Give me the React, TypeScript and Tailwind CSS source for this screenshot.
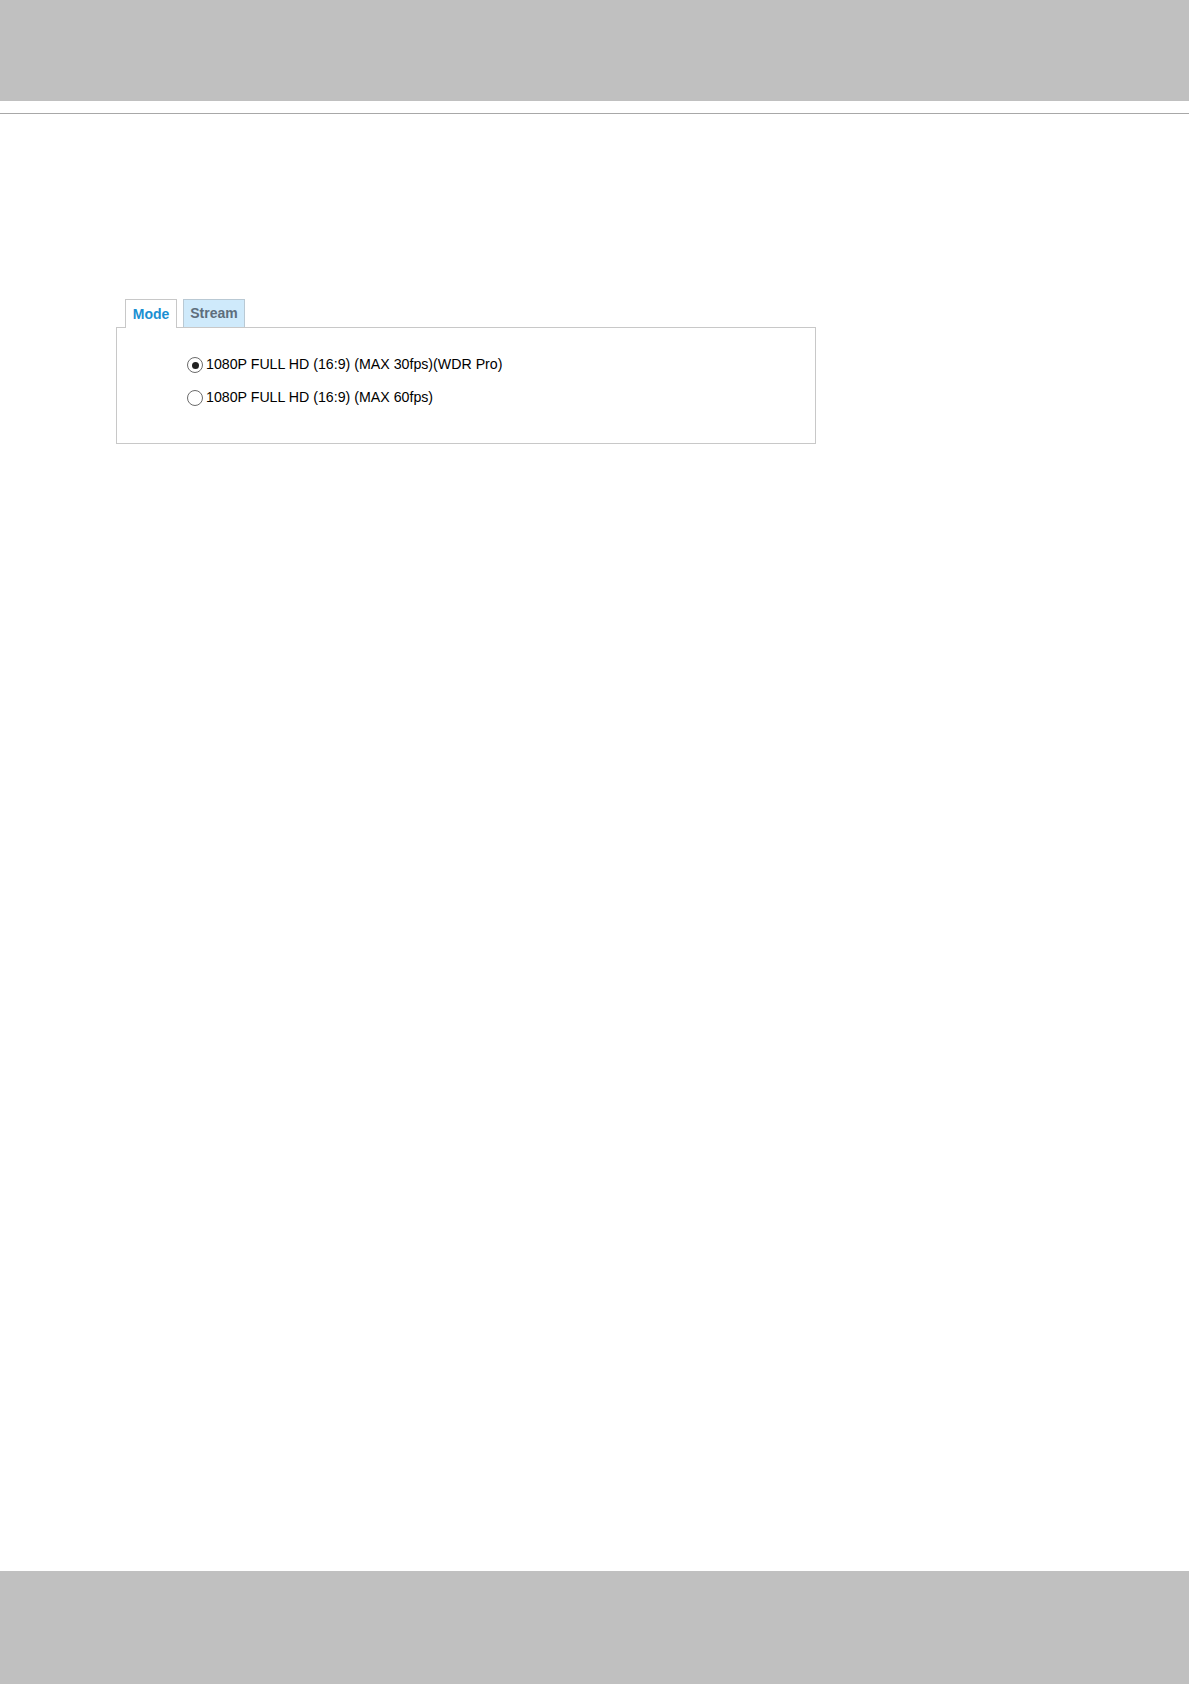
export default function App() {
  const options = [
    { id: "wdr", label: "1080P FULL HD (16:9) (MAX 30fps)(WDR Pro)", checked: true },
    { id: "60", label: "1080P FULL HD (16:9) (MAX 60fps)", checked: false },
  ];

  return (
    <div className="flex h-[1684px] w-[1191px] flex-col bg-white font-['Liberation_Sans',Arial,sans-serif]">
      <div className="h-[101px] w-[1189px] shrink-0 bg-[#c0c0c0]" />
      <div className="mt-[12px] h-px w-[1189px] shrink-0 bg-[#a8a8a8]" />

      <div className="mt-[185px] pl-[116px]">
        <div className="flex items-end gap-[6px] pl-[9px]">
          <div className="relative z-10 -mb-px flex h-[29px] w-[52px] items-center justify-center border border-b-0 border-[#c8c8c8] bg-white text-[14px] font-bold text-[#1b8fd2]">
            Mode
          </div>
          <div className="flex h-[28px] w-[62px] items-center justify-center border border-b-0 border-[#b9c9d4] bg-[#cfeafb] text-[14px] font-bold text-[#5e6e7c]">
            Stream
          </div>
        </div>
        <div className="h-[117px] w-[700px] border border-[#c8c8c8] bg-white pl-[70px] pt-[28px]">
          <div className="flex flex-col gap-[15px]">
            {options.map((o) => (
              <div key={o.id} className="flex h-[18px] items-center gap-[3px] text-[14.2px] text-black">
                <span className="flex h-[16px] w-[16px] items-center justify-center rounded-full border border-[#6b6b6b] bg-white">
                  {o.checked ? <span className="h-[7px] w-[7px] rounded-full bg-[#222]" /> : null}
                </span>
                <span>{o.label}</span>
              </div>
            ))}
          </div>
        </div>
      </div>

      <div className="flex-1" />
      <div className="h-[113px] w-[1189px] shrink-0 bg-[#c0c0c0]" />
    </div>
  );
}
